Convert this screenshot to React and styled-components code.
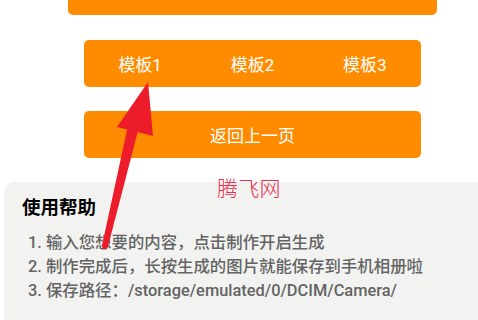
import React from "react";
import styled, { createGlobalStyle } from "styled-components";

const Global = createGlobalStyle`
  html, body { margin: 0; padding: 0; background: #fff; }
  body { font-family: Roboto, "Noto Sans CJK SC", sans-serif; overflow: hidden; }
`;

const Page = styled.div`
  position: relative;
  width: 478px;
  height: 320px;
  overflow: hidden;
  display: flex;
  flex-direction: column;
  align-items: flex-start;
`;

const TopBar = styled.div`
  margin-left: 68px;
  width: 369px;
  height: 15px;
  background: #ff8c00;
  border-radius: 0 0 5px 5px;
`;

const OrangeBar = styled.div`
  margin-left: 84px;
  margin-top: ${(p) => p.$gap}px;
  width: 337px;
  height: 47px;
  background: #ff8c00;
  border-radius: 5px;
  display: flex;
  align-items: center;
  justify-content: center;
  color: #fff;
  font-size: 17px;
`;

const Tab = styled.div`
  flex: 1;
  text-align: center;
`;

const Panel = styled.div`
  margin-top: 24px;
  margin-left: 4px;
  width: 484px;
  flex: 1;
  background: #f2f3f1;
  border-radius: 10px 0 0 0;
  padding: 13px 0 0 18px;
  box-sizing: border-box;
`;

const Title = styled.div`
  font-size: 18.5px;
  font-weight: 700;
  color: #000;
  line-height: 26px;
`;

const List = styled.div`
  margin-top: 10px;
  padding-left: 6px;
  color: #646464;
  font-size: 16.4px;
  line-height: 24px;
  font-weight: 500;
  white-space: nowrap;
`;

const Watermark = styled.div`
  position: absolute;
  left: 217px;
  top: 172px;
  font-size: 21px;
  font-weight: 300;
  color: #ea2f4e;
  font-family: "Noto Sans CJK SC", sans-serif;
  letter-spacing: 0.3px;
`;

const Overlay = styled.svg`
  position: absolute;
  left: 0;
  top: 0;
  pointer-events: none;
`;

export default function App() {
  return (
    <>
      <Global />
      <Page>
        <TopBar />
        <OrangeBar $gap={25}>
          <Tab>模板1</Tab>
          <Tab>模板2</Tab>
          <Tab>模板3</Tab>
        </OrangeBar>
        <OrangeBar $gap={24}>返回上一页</OrangeBar>
        <Panel>
          <Title>使用帮助</Title>
          <List>
            <div>1. 输入您想要的内容，点击制作开启生成</div>
            <div>2. 制作完成后，长按生成的图片就能保存到手机相册啦</div>
            <div>3. 保存路径：/storage/emulated/0/DCIM/Camera/</div>
          </List>
        </Panel>
        <Watermark>腾飞网</Watermark>
        <Overlay width="478" height="320" viewBox="0 0 478 320">
          <polygon points="102.1,245.3 107.9,246.7 138.4,129.3 127.7,126.7" fill="#ec1c2a" />
          <circle cx="105" cy="246" r="3" fill="#ec1c2a" />
          <polygon points="148,82 117,127 153,136" fill="#ec1c2a" />
        </Overlay>
      </Page>
    </>
  );
}
